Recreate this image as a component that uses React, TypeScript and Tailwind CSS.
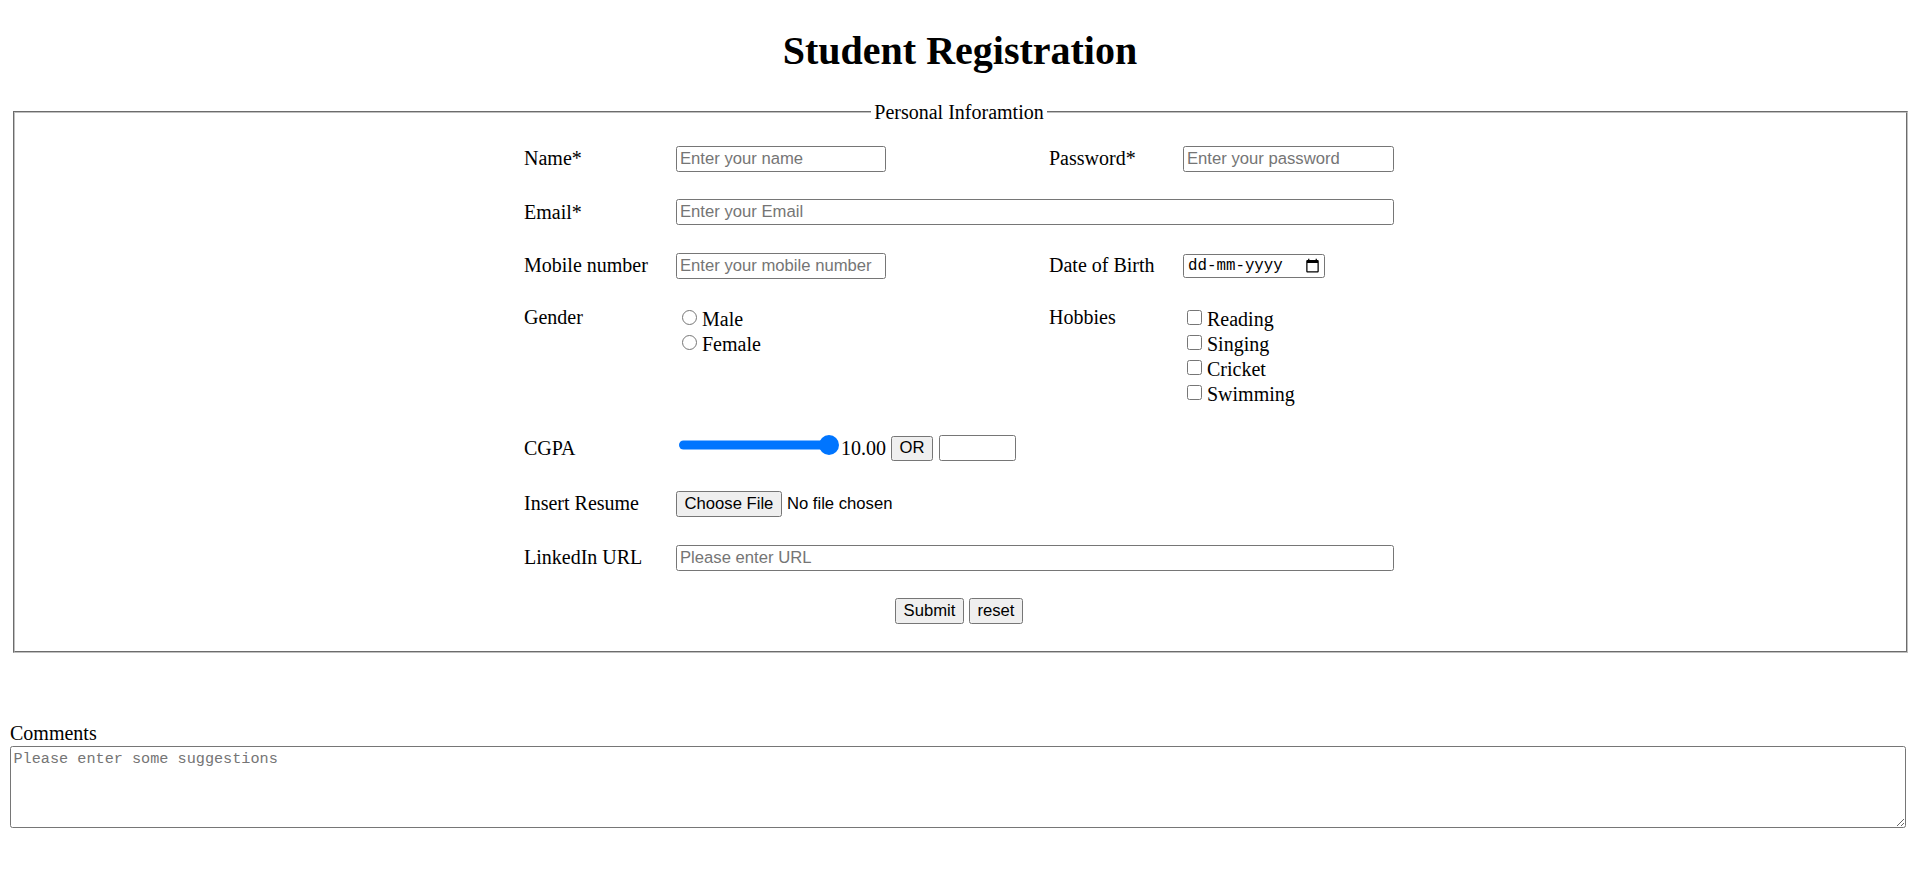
const field =
  "h-[26px] rounded-[2.5px] border border-[#767676] bg-white px-[3px] font-['Liberation_Sans',Arial,sans-serif] text-[16.67px] text-black placeholder:text-[#757575] outline-none"

const btn =
  "rounded-[2.5px] border border-[#767676] bg-[#efefef] px-[7.5px] font-['Liberation_Sans',Arial,sans-serif] text-[16.67px] leading-[normal] text-black"

function Choice({ type, name, label }: { type: 'radio' | 'checkbox'; name: string; label: string }) {
  return (
    <label className="flex h-[25px] items-start">
      <input
        type={type}
        name={name}
        className={
          type === 'radio'
            ? 'mt-[4px] ml-[6px] mr-[5px] h-[15px] w-[15px] shrink-0'
            : 'mt-[4px] ml-[4px] mr-[5px] h-[15px] w-[15px] shrink-0'
        }
      />
      <span className="mt-[2px]">{label}</span>
    </label>
  )
}

function CalendarIcon() {
  return (
    <svg width="15" height="15" viewBox="0 0 24 24" className="shrink-0">
      <path
        d="M20 3h-1V1h-2v2H7V1H5v2H4c-1.1 0-2 .9-2 2v16c0 1.1.9 2 2 2h16c1.1 0 2-.9 2-2V5c0-1.1-.9-2-2-2zm0 18H4V8h16v13z"
        fill="#000"
      />
    </svg>
  )
}

export default function App() {
  return (
    <div className="min-h-screen bg-white text-[20px] leading-[normal] text-black font-['Liberation_Serif','Times_New_Roman',serif]">
      <h1 className="my-[26.8px] text-center text-[40px] font-bold">Student Registration</h1>

      <fieldset className="ml-[13px] mr-[12px] pl-[15px] pr-[18px] pt-[22px] pb-[27.5px] [border:2px_groove_#c0c0c0]">
        <legend className="mx-auto px-[3px]">Personal Inforamtion</legend>

        <div className="mx-auto grid w-[870px] grid-cols-[152px_373px_134px_211px] items-center gap-y-[27.5px]">
          {/* name / password */}
          <div>Name*</div>
          <div>
            <input type="text" placeholder="Enter your name" className={`${field} w-[210px]`} />
          </div>
          <div>Password*</div>
          <div>
            <input type="password" placeholder="Enter your password" className={`${field} w-[211px]`} />
          </div>

          {/* email */}
          <div>Email*</div>
          <div className="col-span-3">
            <input type="email" placeholder="Enter your Email" className={`${field} w-full`} />
          </div>

          {/* mobile / dob */}
          <div>Mobile number</div>
          <div>
            <input type="text" placeholder="Enter your mobile number" className={`${field} w-[210px]`} />
          </div>
          <div>Date of Birth</div>
          <div>
            <div className="flex h-[24px] w-[142px] items-center justify-between rounded-[2.5px] border border-[#767676] pl-[4px] pr-[4px]">
              <span className="font-['Liberation_Mono','Courier_New',monospace] text-[15.8px]">dd-mm-yyyy</span>
              <CalendarIcon />
            </div>
          </div>

          {/* gender / hobbies */}
          <div className="self-start">Gender</div>
          <div className="self-start">
            <Choice type="radio" name="gender" label="Male" />
            <Choice type="radio" name="gender" label="Female" />
          </div>
          <div className="self-start">Hobbies</div>
          <div className="self-start">
            <Choice type="checkbox" name="reading" label="Reading" />
            <Choice type="checkbox" name="singing" label="Singing" />
            <Choice type="checkbox" name="cricket" label="Cricket" />
            <Choice type="checkbox" name="swimming" label="Swimming" />
          </div>

          {/* cgpa */}
          <div>CGPA</div>
          <div className="col-span-3 flex h-[29.5px] items-center">
            <svg width="160" height="20" viewBox="0 0 160 20" className="mb-[7px] ml-[3px] shrink-0">
              <rect x="0" y="5.5" width="150" height="9" rx="4.5" fill="#0075ff" />
              <circle cx="150" cy="10" r="10" fill="#0075ff" />
            </svg>
            <span className="ml-[2px]">10.00</span>
            <button className={`${btn} ml-[5px] h-[25px]`}>OR</button>
            <input type="text" className={`${field} ml-[6px] h-[25.5px] w-[77px]`} />
          </div>

          {/* resume */}
          <div>Insert Resume</div>
          <div className="col-span-3 flex items-center">
            <button className={`${btn} h-[26.5px]`}>Choose File</button>
            <span className="ml-[5px] font-['Liberation_Sans',Arial,sans-serif] text-[16.67px]">No file chosen</span>
          </div>

          {/* linkedin */}
          <div>LinkedIn URL</div>
          <div className="col-span-3">
            <input type="url" placeholder="Please enter URL" className={`${field} h-[25.5px] w-full`} />
          </div>

          {/* actions */}
          <div className="col-span-4 flex justify-center gap-[5px]">
            <button className={`${btn} h-[25.5px]`}>Submit</button>
            <button className={`${btn} h-[25.5px]`}>reset</button>
          </div>
        </div>
      </fieldset>

      <div className="ml-[10px] mt-[69px]">Comments</div>
      <textarea
        placeholder="Please enter some suggestions"
        className="ml-[10px] mt-[1px] block h-[82px] w-[1896px] resize rounded-[2.5px] border border-[#767676] px-[2.5px] py-[2.5px] font-['Liberation_Mono','Courier_New',monospace] text-[15.2px] leading-[normal] outline-none placeholder:text-[#757575]"
      />
    </div>
  )
}
